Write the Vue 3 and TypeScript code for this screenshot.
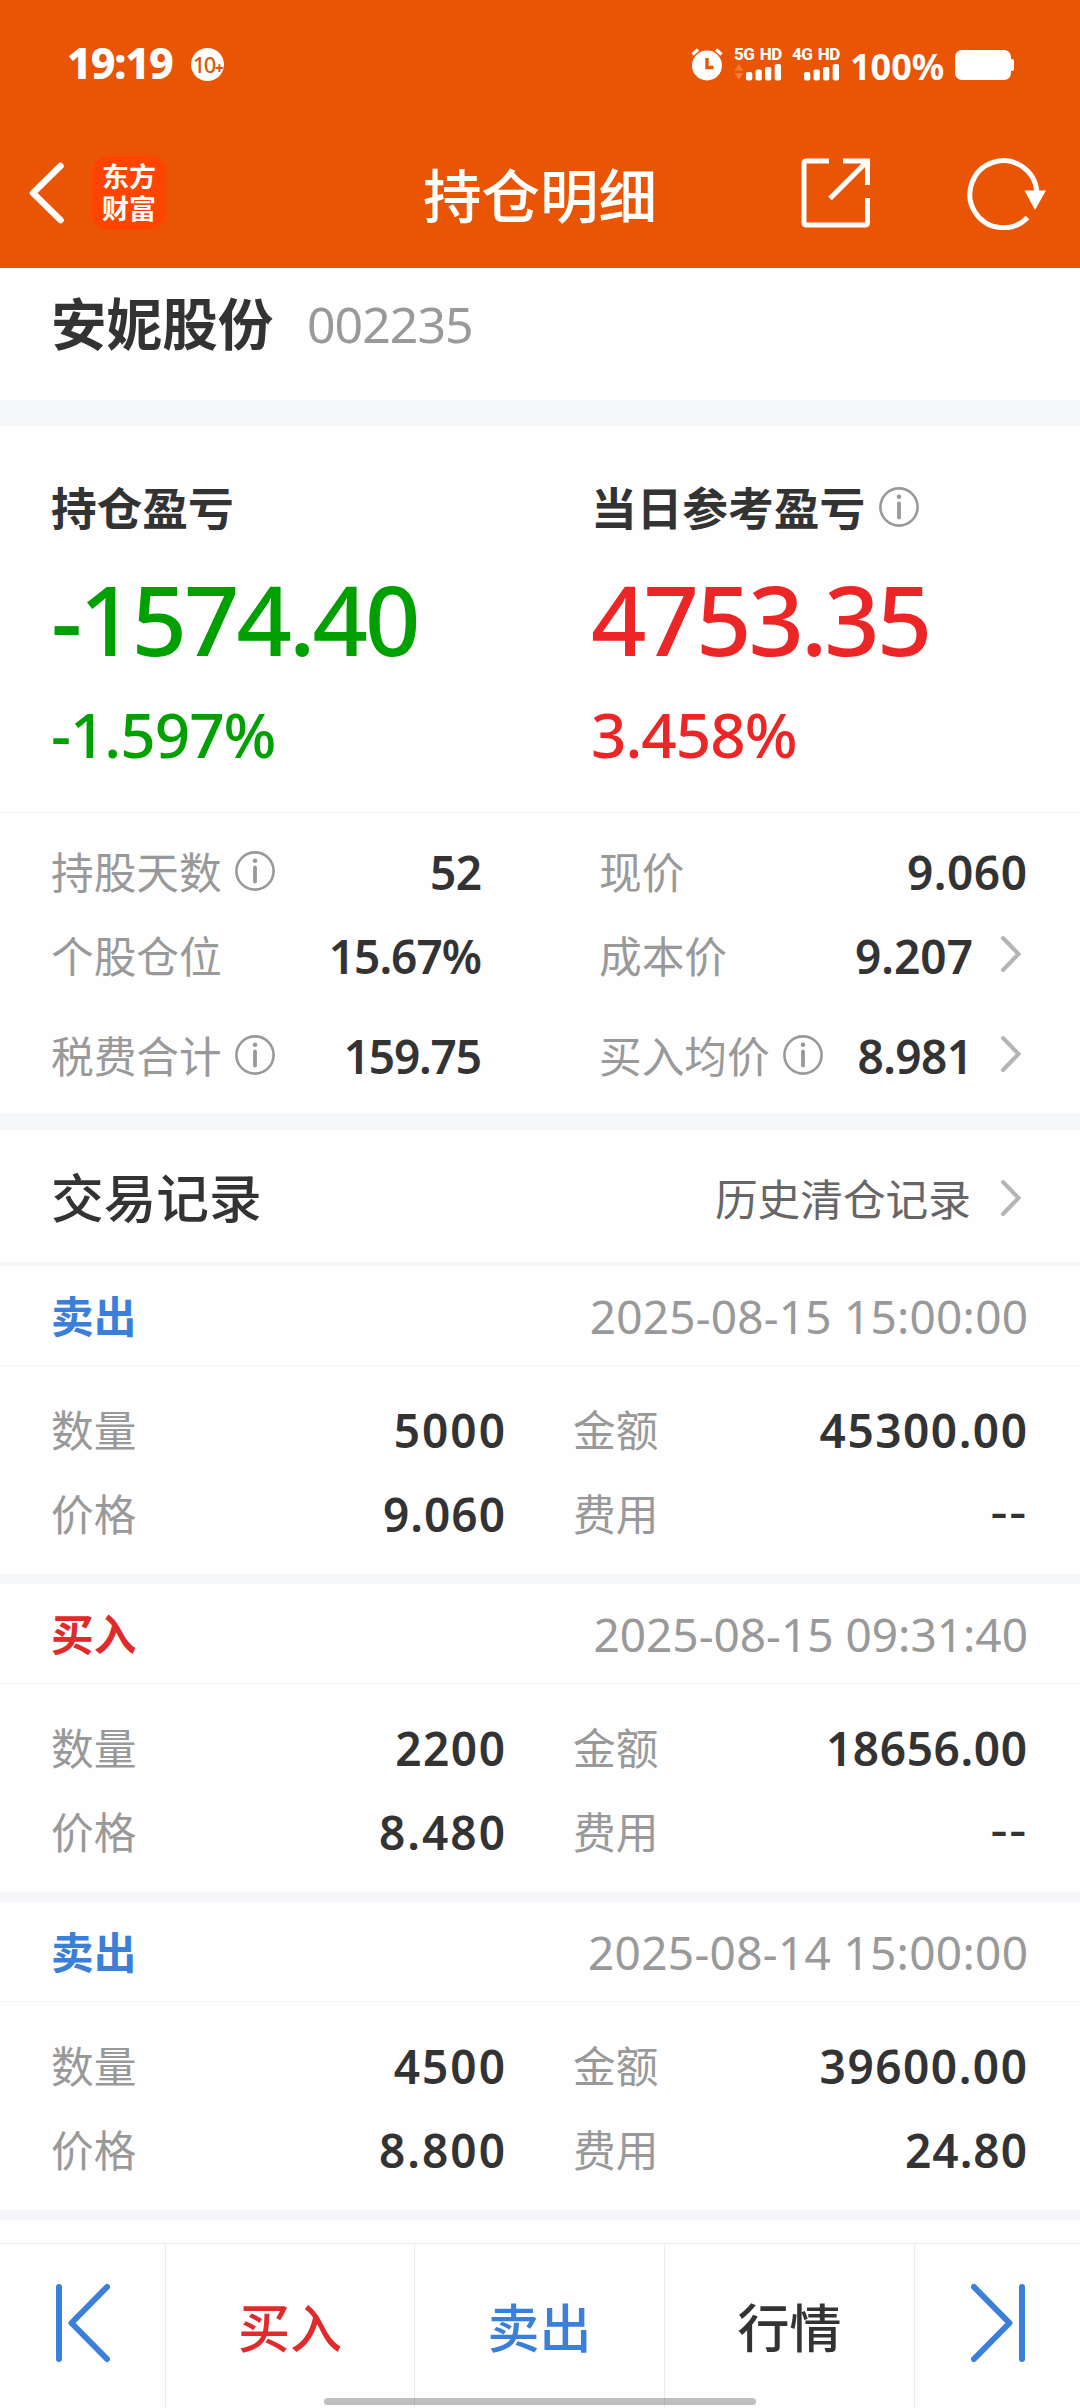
<script setup lang="ts">
interface Fact {
  label: string
  value: string
  info?: boolean
  link?: boolean
  spacing?: number
}
interface TradeRecord {
  side: 'buy' | 'sell'
  time: string
  timeSpacing: number
  facts: Fact[]
}

const facts: Fact[] = [
  { label: '持股天数', value: '52', info: true, spacing: -0.5 },
  { label: '现价', value: '9.060', spacing: 0.5 },
  { label: '个股仓位', value: '15.67%', spacing: -1 },
  { label: '成本价', value: '9.207', link: true },
  { label: '税费合计', value: '159.75', info: true, spacing: -1.2 },
  { label: '买入均价', value: '8.981', info: true, link: true, spacing: -0.6 },
]

const records: TradeRecord[] = [
  {
    side: 'sell',
    time: '2025-08-15 15:00:00',
    timeSpacing: 0.2,
    facts: [
      { label: '数量', value: '5000', spacing: 2 },
      { label: '金额', value: '45300.00', spacing: 1.5 },
      { label: '价格', value: '9.060', spacing: 1 },
      { label: '费用', value: '--' },
    ],
  },
  {
    side: 'buy',
    time: '2025-08-15 09:31:40',
    timeSpacing: 0,
    facts: [
      { label: '数量', value: '2200', spacing: 1.5 },
      { label: '金额', value: '18656.00', spacing: 0.6 },
      { label: '价格', value: '8.480', spacing: 2 },
      { label: '费用', value: '--' },
    ],
  },
  {
    side: 'sell',
    time: '2025-08-14 15:00:00',
    timeSpacing: 0.3,
    facts: [
      { label: '数量', value: '4500', spacing: 2 },
      { label: '金额', value: '39600.00', spacing: 1.5 },
      { label: '价格', value: '8.800', spacing: 2 },
      { label: '费用', value: '24.80', spacing: 1 },
    ],
  },
]

const sideText = { buy: '买入', sell: '卖出' }

// The trailing letter gap is cancelled so values stay flush right.
function track(px = 0) {
  return { letterSpacing: `${px}px`, marginRight: `${-px}px` }
}
</script>

<template>
  <div class="page">
    <header class="top">
      <div class="status">
        <span class="clock">19:19</span>
        <span class="badge">10<b>+</b></span>
        <svg class="alarm" width="34" height="34" viewBox="0 0 34 34">
          <circle cx="17" cy="18.500" r="15" fill="#fff" />
          <path d="M2.500 7.500 8 2.500M31.500 7.500 26 2.500" stroke="#fff" stroke-width="3.400" />
          <path d="M17 11v9.500h6.500" fill="none" stroke="#e95504" stroke-width="3.400" />
        </svg>
        <div class="sim">
          <span class="net">5G HD</span>
          <svg width="48" height="18" viewBox="0 0 48 18">
            <path d="M0.500 7.500 5 1l4.500 6.500zM0.500 10h9L5 16.500z" fill="#ff7a38" />
            <g fill="#fff">
              <rect x="12" y="9" width="6.300" height="8.500" rx="2" />
              <rect x="21.500" y="6.500" width="6.300" height="11" rx="2" />
              <rect x="31" y="4" width="6.300" height="13.500" rx="2" />
              <rect x="40.700" y="1" width="6.300" height="16.500" rx="2" />
            </g>
          </svg>
        </div>
        <div class="sim second">
          <span class="net">4G HD</span>
          <svg width="48" height="18" viewBox="0 0 48 18">
            <g fill="#fff">
              <rect x="12" y="9" width="6.300" height="8.500" rx="2" />
              <rect x="21.500" y="6.500" width="6.300" height="11" rx="2" />
              <rect x="31" y="4" width="6.300" height="13.500" rx="2" />
              <rect x="40.700" y="1" width="6.300" height="16.500" rx="2" />
            </g>
          </svg>
        </div>
        <span class="percent">100%</span>
        <svg class="battery" width="59" height="30" viewBox="0 0 59 30">
          <rect width="56" height="30" rx="7" fill="#fff" />
          <rect x="52" y="9" width="7" height="12" rx="2" fill="#fff" />
        </svg>
      </div>
      <nav class="bar">
        <svg class="back" width="38" height="64" viewBox="0 0 38 64">
          <path d="M32.500 5 5 32 32.500 59" fill="none" stroke="#fff" stroke-width="6.500" stroke-linecap="round" stroke-linejoin="round" />
        </svg>
        <div class="logo">东方财富</div>
        <h1>持仓明细</h1>
        <svg class="share" width="70" height="70" viewBox="0 0 70 70" fill="none" stroke="#fff" stroke-width="5">
          <path d="M28 3H5.500Q3 3 3 5.500v59Q3 67 5.500 67h58.500Q66.500 67 66.500 64.500V40" />
          <path d="M42 3h24.500v24M66.500 3 29 40.500" />
        </svg>
        <svg class="reload" width="80" height="72" viewBox="0 0 80 72">
          <path d="M69.800 34A33.500 33.500 0 1 0 60.500 59.500" fill="none" stroke="#fff" stroke-width="5" />
          <path d="M57.500 32.500h21.500L68 52z" fill="#fff" />
        </svg>
      </nav>
    </header>

    <section class="stock">
      <h2>安妮股份</h2>
      <span class="code">002235</span>
    </section>

    <section class="profit">
      <div class="col">
        <div class="cap">持仓盈亏</div>
        <div class="big down">-1574.40</div>
        <div class="rate down">-1.597%</div>
      </div>
      <div class="col">
        <div class="cap">
          当日参考盈亏
          <svg class="info" width="40" height="40" viewBox="0 0 40 40">
            <circle cx="20" cy="20" r="18.600" fill="none" stroke="#999" stroke-width="2.600" />
            <circle cx="20" cy="9.800" r="2.300" fill="#999" />
            <path d="M20 16.500v14" stroke="#999" stroke-width="3.800" stroke-linecap="round" />
          </svg>
        </div>
        <div class="big up">4753.35</div>
        <div class="rate up">3.458%</div>
      </div>
    </section>

    <section class="facts">
      <div v-for="f in facts" :key="f.label" class="fact">
        <span class="label">{{ f.label }}</span>
        <svg v-if="f.info" class="info" width="40" height="40" viewBox="0 0 40 40">
          <circle cx="20" cy="20" r="18.600" fill="none" stroke="#999" stroke-width="2.600" />
          <circle cx="20" cy="9.800" r="2.300" fill="#999" />
          <path d="M20 16.500v14" stroke="#999" stroke-width="3.800" stroke-linecap="round" />
        </svg>
        <span class="value" :style="track(f.spacing)">{{ f.value }}</span>
        <svg v-if="f.link" class="arrow" width="22" height="38" viewBox="0 0 22 38">
          <path d="M3 3 18.500 19 3 35" fill="none" stroke="#b4b4b4" stroke-width="4" stroke-linecap="round" />
        </svg>
      </div>
    </section>

    <section class="history">
      <h3>交易记录</h3>
      <span class="more">历史清仓记录</span>
      <svg class="arrow" width="22" height="38" viewBox="0 0 22 38">
        <path d="M3 3 18.500 19 3 35" fill="none" stroke="#b4b4b4" stroke-width="4" stroke-linecap="round" />
      </svg>
    </section>

    <article v-for="r in records" :key="r.time" class="record">
      <div class="head">
        <b :class="r.side">{{ sideText[r.side] }}</b>
        <time :style="track(r.timeSpacing)">{{ r.time }}</time>
      </div>
      <div class="body">
        <div v-for="f in r.facts" :key="f.label" class="fact">
          <span class="label">{{ f.label }}</span>
          <span class="value" :class="{ none: f.value === '--' }" :style="track(f.spacing)">{{ f.value }}</span>
        </div>
      </div>
    </article>

    <footer class="tabs">
      <div class="tab side">
        <svg width="56" height="80" viewBox="0 0 56 80" fill="none" stroke="#3a80da" stroke-width="6" stroke-linecap="round" stroke-linejoin="round">
          <path d="M4 4v72M52 4 16.500 40 52 76" />
        </svg>
      </div>
      <div class="tab buy">买入</div>
      <div class="tab sell">卖出</div>
      <div class="tab">行情</div>
      <div class="tab side">
        <svg width="56" height="80" viewBox="0 0 56 80" fill="none" stroke="#3a80da" stroke-width="6" stroke-linecap="round" stroke-linejoin="round">
          <path d="M52 4v72M4 4 39.500 40 4 76" />
        </svg>
      </div>
      <i class="home"></i>
    </footer>
  </div>
</template>

<style>
body {
  margin: 0;
  background: #fff;
}
</style>

<style scoped>
.page {
  width: 1080px;
  height: 2408px;
  overflow: hidden;
  display: flex;
  flex-direction: column;
  background: #fefefe;
  color: #333;
  font-family: "Noto Sans", "Noto Sans CJK SC", sans-serif;
}
.page > * {
  box-sizing: border-box;
  flex-shrink: 0;
}
h1, h2, h3 {
  margin: 0;
}
svg {
  display: block;
  flex-shrink: 0;
}
.top {
  height: 268px;
  background: #e95504;
  color: #fff;
}
.status {
  height: 118px;
  padding: 44px 66px 0 67px;
  box-sizing: border-box;
  display: flex;
  align-items: flex-start;
}
.clock {
  width: 108px;
  font-size: 43px;
  font-weight: 800;
  line-height: 38px;
  letter-spacing: -1.2px;
  white-space: nowrap;
}
.badge {
  width: 33px;
  height: 33px;
  margin: 4px 0 0 16px;
  border-radius: 50%;
  background: #fff;
  color: #d9590f;
  font-size: 22px;
  font-weight: 500;
  line-height: 32px;
  letter-spacing: -1.5px;
  display: flex;
  justify-content: center;
}
.badge b {
  font-size: 15px;
  font-weight: 900;
  line-height: 40px;
}
.alarm {
  margin: 3px 10px 0 auto;
}
.sim {
  width: 48px;
  padding-top: 2px;
}
.second {
  margin-left: 10px;
}
.net {
  display: block;
  height: 17px;
  font-family: Roboto, sans-serif;
  font-size: 17px;
  font-weight: 800;
  line-height: 17px;
  letter-spacing: -0.6px;
  word-spacing: 2px;
  white-space: nowrap;
}
.percent {
  width: 94px;
  margin-left: 10px;
  font-size: 36px;
  font-weight: 700;
  line-height: 46px;
  white-space: nowrap;
}
.battery {
  margin: 6px 0 0 11px;
}
.bar {
  height: 150px;
  display: flex;
  align-items: flex-start;
}
.back {
  margin: 43px 0 0 28px;
}
.logo {
  width: 74px;
  height: 74px;
  margin: 38px 0 0 26px;
  padding: 4px 10px 0;
  box-sizing: border-box;
  border-radius: 16px;
  background: #ff4400;
  font-family: "Noto Sans CJK SC", sans-serif;
  font-size: 27px;
  font-weight: 700;
  line-height: 32px;
  word-break: break-all;
}
h1 {
  width: 236px;
  margin: 42px 0 0 257px;
  font-size: 58.5px;
  font-weight: 500;
  line-height: 70px;
  white-space: nowrap;
}
.share {
  margin: 40px 0 0 142px;
}
.reload {
  margin: 40px 0 0 96px;
}
.stock {
  height: 158px;
  padding: 16px 0 0 51px;
  border-bottom: 26px solid #f6f7fa;
  display: flex;
  line-height: 80px;
}
h2 {
  width: 223px;
  font-size: 55.6px;
  line-height: 80px;
}
.code {
  margin-left: 33px;
  color: #999;
  font-size: 50px;
  font-weight: 450;
  letter-spacing: -1px;
}
.profit {
  height: 387px;
  padding: 54px 0 0 51px;
  border-bottom: 1px solid #f4f5f7;
  display: flex;
}
.col {
  width: 540px;
  flex-shrink: 0;
}
.cap {
  display: flex;
  align-items: center;
  gap: 14px;
  height: 56px;
  font-size: 45.7px;
  font-weight: 700;
  line-height: 58px;
}
.cap .info {
  margin-top: -3px;
}
.big {
  height: 112px;
  margin-top: 26px;
  font-size: 97px;
  font-weight: 500;
  line-height: 112px;
  letter-spacing: -3px;
}
.rate {
  margin-top: 9px;
  height: 70px;
  font-size: 62px;
  font-weight: 500;
  line-height: 102px;
  letter-spacing: -1px;
}
.down {
  color: #00a000;
}
.up {
  color: #ec2626;
}
.facts {
  height: 317px;
  padding: 17px 53px 0 51px;
  border-bottom: 17px solid #f6f7fa;
  display: grid;
  grid-template-columns: 431px 428px;
  grid-template-rows: 84px 84px 115px;
  column-gap: 117px;
}
.fact {
  display: flex;
  align-items: center;
}
.label {
  color: #999;
  font-size: 42.7px;
  line-height: 60px;
  padding-top: 2px;
}
.fact .info {
  margin: -2px 0 0 13px;
}
.value {
  margin-left: auto;
  flex: 1;
  text-align: right;
  font-size: 46px;
  font-weight: 600;
  line-height: 60px;
  white-space: nowrap;
}
.value.none {
  font-family: Inter, sans-serif;
  font-size: 40px;
}
.arrow {
  margin: -4px 5px 0 27px;
}
.history {
  height: 136px;
  padding: 3px 53px 0 51px;
  border-bottom: 4px solid #f6f7fa;
  display: flex;
  align-items: center;
}
h3 {
  flex: 1;
  font-size: 52.7px;
  font-weight: 500;
  line-height: 80px;
}
.more {
  color: #666;
  font-size: 42.7px;
  line-height: 60px;
  padding-top: 4px;
}
.history .arrow {
  margin: 0 5px 0 29px;
}
.record {
  height: 318px;
  border-bottom: 10px solid #f6f7fa;
}
.head {
  height: 100px;
  padding: 0 52px 0 51px;
  box-sizing: border-box;
  border-bottom: 1px solid #f4f5f7;
  display: flex;
  align-items: center;
  justify-content: space-between;
  font-size: 42.7px;
  line-height: 60px;
}
.head b {
  padding-top: 3px;
}
time {
  color: #999;
  font-size: 46px;
  font-weight: 450;
}
.buy {
  color: #e12a2a;
}
.sell {
  color: #3a80da;
}
.body {
  padding: 22px 53px 0 51px;
  display: grid;
  grid-template-columns: 454px 454px;
  grid-template-rows: 84px 84px;
  column-gap: 68px;
}
.tabs {
  position: relative;
  margin-top: 23px;
  height: 165px;
  border-top: 1px solid #ececec;
  display: grid;
  grid-template-columns: 166px 249px 250px 250px 165px;
}
.tab {
  box-sizing: border-box;
  padding-top: 42px;
  border-right: 1px solid #ececec;
  text-align: center;
  font-size: 52px;
  font-weight: 500;
  line-height: 84px;
}
.side {
  padding-top: 39px;
  display: flex;
  justify-content: center;
}
.tab:nth-child(5) {
  border-right: 0;
}
.home {
  position: absolute;
  left: 324px;
  bottom: 3px;
  width: 432px;
  height: 7px;
  border-radius: 4px;
  background: rgba(0, 0, 0, 0.25);
}
</style>
